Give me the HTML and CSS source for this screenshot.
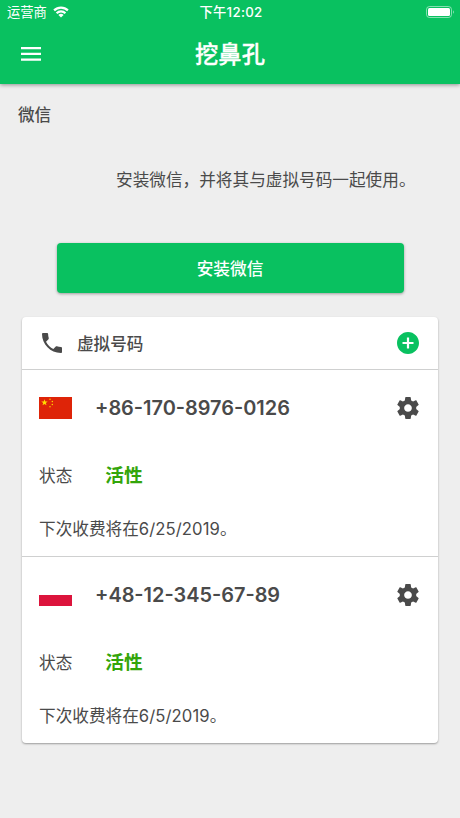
FILE: index.html
```html
<!DOCTYPE html>
<html lang="zh-CN">
<head>
<meta charset="utf-8">
<title>挖鼻孔</title>
<link rel="stylesheet" href="styles.css">
</head>
<body>
<header class="top">
  <div class="status">
    <div class="carrier"><span>运营商</span>
      <svg class="wifi" viewBox="0 0 16 12"><path d="M8 11.6 5.4 9a3.700 3.700 0 0 1 5.200 0z" fill="#fff"/><path d="M3.600 7.200a6.200 6.200 0 0 1 8.800 0M1.100 4.400a9.800 9.800 0 0 1 13.800 0" fill="none" stroke="#fff" stroke-width="2.200"/></svg>
    </div>
    <span class="time">下午12:02</span>
    <svg class="battery" viewBox="0 0 28 12"><rect x=".5" y=".5" width="25" height="11" rx="3" fill="none" stroke="#fff" stroke-opacity=".5"/><rect x="2" y="2" width="22" height="8" rx="1.500" fill="#fff"/><path d="M27 4.200q1.600 1.800 0 3.600z" fill="#fff" fill-opacity=".6"/></svg>
  </div>
  <div class="bar">
    <svg class="menu" viewBox="0 0 20 14"><path d="M0 1.200h20M0 6.900h20M0 12.600h20" stroke="#fff" stroke-width="2.200"/></svg>
    <h1>挖鼻孔</h1>
  </div>
</header>
<main>
  <h2>微信</h2>
  <p class="intro">安装微信，并将其与虚拟号码一起使用。</p>
  <button class="install">安装微信</button>
  <section class="card">
    <div class="card-head">
      <svg class="phone" viewBox="3 3 18 18"><path fill="#4a4a4a" d="M6.62 10.79c1.44 2.83 3.76 5.14 6.59 6.59l2.2-2.2c.27-.27.67-.36 1.02-.24 1.12.37 2.33.57 3.57.57.55 0 1 .45 1 1V20c0 .55-.45 1-1 1-9.39 0-17-7.61-17-17 0-.55.45-1 1-1h3.5c.55 0 1 .45 1 1 0 1.25.2 2.45.57 3.57.11.35.03.74-.25 1.02z"/></svg>
      <h3>虚拟号码</h3>
      <svg class="icon" viewBox="2 2 20 20"><path fill="#09c160" d="M12 2C6.48 2 2 6.48 2 12s4.48 10 10 10 10-4.48 10-10S17.52 2 12 2zm5 11h-4v4h-2v-4H7v-2h4V7h2v4h4z"/></svg>
    </div>
    <article class="entry">
      <div class="number-row">
        <svg class="flag" viewBox="0 0 33 22"><path fill="#de2408" d="M0 0h33v22H0z"/><g fill="#ffde00"><path d="m5.500 2.200.8 2.300h2.400L6.800 6l.7 2.300-2-1.400-2 1.400L4.200 6 2.300 4.500h2.400z"/><circle cx="11" cy="2.300" r=".7"/><circle cx="13.300" cy="4.500" r=".7"/><circle cx="13.300" cy="7.500" r=".7"/><circle cx="11" cy="9.700" r=".7"/></g></svg>
        <span class="number">+86-170-8976-0126</span>
        <svg class="icon" viewBox="2 2 20 20"><path fill="#4a4a4a" d="M19.430 12.980c.04-.32.07-.64.07-.98s-.03-.66-.07-.98l2.110-1.650c.19-.15.24-.42.12-.64l-2-3.460c-.12-.22-.39-.3-.61-.22l-2.490 1c-.52-.4-1.080-.73-1.690-.98l-.38-2.650C14.460 2.180 14.250 2 14 2h-4c-.25 0-.46.18-.49.42l-.38 2.650c-.61.25-1.170.59-1.690.98l-2.490-1c-.23-.09-.49 0-.61.22l-2 3.460c-.13.22-.07.49.12.64l2.110 1.650c-.04.32-.07.65-.07.98s.03.66.07.98l-2.110 1.650c-.19.15-.24.42-.12.64l2 3.460c.12.22.39.3.61.22l2.490-1c.52.4 1.080.73 1.690.98l.38 2.650c.03.24.24.42.49.42h4c.25 0 .46-.18.49-.42l.38-2.650c.61-.25 1.170-.59 1.690-.98l2.490 1c.23.09.49 0 .61-.22l2-3.460c.12-.22.07-.49-.12-.64zM12 15.500c-1.930 0-3.500-1.570-3.500-3.500s1.570-3.500 3.500-3.500 3.500 1.570 3.500 3.500-1.570 3.500-3.500 3.500z"/></svg>
      </div>
      <div class="state"><span>状态</span><strong>活性</strong></div>
      <p class="charge">下次收费将在<span class="date">6/25/2019</span>。</p>
    </article>
    <article class="entry">
      <div class="number-row">
        <svg class="flag" viewBox="0 0 33 22"><path fill="#fff" d="M0 0h33v11H0z"/><path fill="#dc143c" d="M0 11h33v11H0z"/></svg>
        <span class="number">+48-12-345-67-89</span>
        <svg class="icon" viewBox="2 2 20 20"><path fill="#4a4a4a" d="M19.430 12.980c.04-.32.07-.64.07-.98s-.03-.66-.07-.98l2.110-1.650c.19-.15.24-.42.12-.64l-2-3.460c-.12-.22-.39-.3-.61-.22l-2.490 1c-.52-.4-1.080-.73-1.690-.98l-.38-2.650C14.460 2.180 14.250 2 14 2h-4c-.25 0-.46.18-.49.42l-.38 2.650c-.61.25-1.170.59-1.690.98l-2.490-1c-.23-.09-.49 0-.61.22l-2 3.460c-.13.22-.07.49.12.64l2.110 1.650c-.04.32-.07.65-.07.98s.03.66.07.98l-2.110 1.650c-.19.15-.24.42-.12.64l2 3.460c.12.22.39.3.61.22l2.490-1c.52.4 1.080.73 1.690.98l.38 2.650c.03.24.24.42.49.42h4c.25 0 .46-.18.49-.42l.38-2.650c.61-.25 1.170-.59 1.690-.98l2.490 1c.23.09.49 0 .61-.22l2-3.460c.12-.22.07-.49-.12-.64zM12 15.500c-1.930 0-3.500-1.570-3.500-3.500s1.570-3.500 3.500-3.500 3.500 1.570 3.500 3.500-1.570 3.500-3.500 3.500z"/></svg>
      </div>
      <div class="state"><span>状态</span><strong>活性</strong></div>
      <p class="charge">下次收费将在<span class="date">6/5/2019</span>。</p>
    </article>
  </section>
</main>
</body>
</html>
```
FILE: styles.css
```css
* { box-sizing: border-box; margin: 0; padding: 0; }
body {
  min-height: 818px;
  background: #eee;
  color: #4a4a4a;
  font-family: Inter, "Noto Sans CJK SC", sans-serif;
  font-size: 16.65px;
  line-height: 24px;
}
svg { display: block; flex: none; }
.top {
  height: 84px;
  background: #09c160;
  color: #fff;
  box-shadow: 0 1px 4px rgba(0, 0, 0, .4);
}
.status {
  display: grid;
  grid-template-columns: 1fr auto 1fr;
  align-items: center;
  height: 24px;
  padding: 0 5px 0 7px;
  font-size: 13.3px;
}
.carrier { display: flex; align-items: center; gap: 6px; }
.wifi { width: 16px; height: 12px; }
.time { font-weight: 500; letter-spacing: .3px; }
.battery { width: 28px; height: 12px; margin-right: 1px; justify-self: end; }
.bar {
  display: grid;
  grid-template-columns: 40px 1fr 40px;
  align-items: center;
  height: 60px;
  padding: 0 21px;
}
.menu { width: 20px; height: 14px; }
h1 {
  padding-top: 2px;
  font-size: 23.3px;
  font-weight: 500;
  line-height: 32px;
  text-align: center;
  -webkit-text-stroke: .3px;
}
main { padding: 19px 22px 0; }
h2 { margin-left: -4px; font-size: 16.6px; font-weight: 500; }
.intro { margin: 41px 0 0 94px; white-space: nowrap; }
.install {
  display: block;
  width: 347px;
  height: 50px;
  margin: 51px 0 0 34.5px;
  border: 0;
  border-radius: 4px;
  background: #09c160;
  box-shadow: 0 1px 3px rgba(0, 0, 0, .35);
  color: #fff;
  font: 500 16.7px Inter, "Noto Sans CJK SC", sans-serif;
}
.card {
  width: 416px;
  margin-top: 24px;
  border-radius: 4px;
  background: #fff;
  box-shadow: 0 1px 2px rgba(0, 0, 0, .35);
}
.card-head { display: flex; align-items: center; height: 52px; padding: 0 19px 0 20px; }
.phone { width: 20px; height: 20px; }
h3 { flex: 1; margin-left: 15px; padding-top: 2px; font-size: 16.6px; font-weight: 500; }
.icon { width: 22px; height: 22px; }
.entry { height: 187px; padding: 26px 19px 0 17px; border-top: 1px solid #cfd0d0; }
.number-row { display: flex; align-items: center; height: 24px; }
.flag { width: 33px; height: 22px; }
.number { flex: 1; margin-left: 23px; font-size: 19.9px; font-weight: 600; }
.state { display: flex; align-items: center; gap: 33px; margin-top: 44px; }
.state strong { color: #33a50a; font-size: 18.7px; font-weight: 700; }
.charge { margin-top: 29px; white-space: nowrap; }
.date { letter-spacing: .08px; }
```
